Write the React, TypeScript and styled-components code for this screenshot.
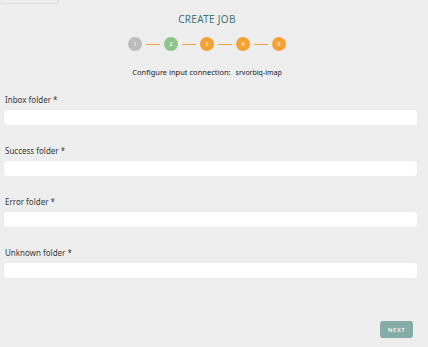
import React, { useState } from 'react';
import styled, { createGlobalStyle } from 'styled-components';

const GlobalStyle = createGlobalStyle`
  html, body {
    margin: 0;
    padding: 0;
    background: #eeeeee;
    font-family: "Noto Sans", "Open Sans", sans-serif;
  }
`;

const Page = styled.div`
  height: 347px;
  padding: 0 11px 0 4px;
  box-sizing: border-box;
  display: flex;
  flex-direction: column;
`;

const BackStub = styled.div`
  width: 60px;
  height: 4px;
  margin-left: -5px;
  border: 1px solid #dedede;
  border-top: none;
  border-radius: 0 0 5px 5px;
  box-sizing: border-box;
`;

const Header = styled.div`
  padding-right: 7px;
  display: flex;
  flex-direction: column;
  align-items: center;
`;

const Title = styled.h1`
  margin: 8px 0 0;
  font-size: 10px;
  line-height: 14px;
  font-weight: 400;
  letter-spacing: 0.3px;
  color: #3d7575;
`;

const Steps = styled.div`
  margin-top: 11px;
  display: flex;
  align-items: center;
  gap: 4px;
`;

type StepState = 'done' | 'current' | 'todo';

const stepColors: Record<StepState, string> = {
  done: '#bdbdbd',
  current: '#8fc58c',
  todo: '#f4a236',
};

const StepDot = styled.div<{ $state: StepState }>`
  width: 14px;
  height: 14px;
  border-radius: 50%;
  background: ${p => stepColors[p.$state]};
  color: #fff;
  font-size: 6px;
  font-weight: 400;
  display: flex;
  align-items: center;
  justify-content: center;
`;

const StepLine = styled.div`
  width: 14px;
  height: 1px;
  background: #f0a040;
`;

const Connection = styled.div`
  margin-top: 15px;
  font-size: 7.5px;
  line-height: 12px;
  color: #222;
`;

const ConnectionName = styled.span`
  margin-left: 5px;
  font-size: 7px;
`;

const Fields = styled.div`
  display: flex;
  flex-direction: column;
`;

const Field = styled.div`
  display: flex;
  flex-direction: column;
  gap: 4px;
  margin-top: 20px;

  &:first-of-type {
    margin-top: 15px;
  }
`;

const Label = styled.label`
  padding-left: 1px;
  font-size: 8px;
  line-height: 12px;
  color: #3a3a3a;
`;

const Input = styled.input`
  height: 15px;
  border: none;
  border-radius: 3px;
  background: #fff;
  box-shadow: 0 0 1px rgba(0, 0, 0, 0.08);
  outline: none;
  padding: 0 4px;
  font-size: 8px;
  box-sizing: border-box;
`;

const Footer = styled.div`
  margin-top: 43px;
  display: flex;
  justify-content: flex-end;
  padding-right: 4px;
`;

const NextButton = styled.button`
  width: 33px;
  height: 17px;
  border: none;
  border-radius: 3px;
  background: #86aca7;
  color: #f4f8f7;
  font-family: "Noto Sans", sans-serif;
  font-size: 6px;
  font-weight: 600;
  letter-spacing: 0.6px;
  padding: 0;
  cursor: pointer;
`;

const steps: StepState[] = ['done', 'current', 'todo', 'todo', 'todo'];
const folders = ['Inbox folder', 'Success folder', 'Error folder', 'Unknown folder'];

const App: React.FC = () => {
  const [values, setValues] = useState<Record<string, string>>({});

  return (
    <>
      <GlobalStyle />
      <Page>
        <BackStub />
        <Header>
          <Title>CREATE JOB</Title>
          <Steps>
            {steps.map((state, i) => (
              <React.Fragment key={i}>
                {i > 0 && <StepLine />}
                <StepDot $state={state}>{i + 1}</StepDot>
              </React.Fragment>
            ))}
          </Steps>
          <Connection>
            Configure input connection:<ConnectionName>srvorbiq-imap</ConnectionName>
          </Connection>
        </Header>
        <Fields>
          {folders.map(name => (
            <Field key={name}>
              <Label>{name} *</Label>
              <Input
                value={values[name] || ''}
                onChange={e => setValues({ ...values, [name]: e.target.value })}
              />
            </Field>
          ))}
        </Fields>
        <Footer>
          <NextButton>NEXT</NextButton>
        </Footer>
      </Page>
    </>
  );
};

export default App;
